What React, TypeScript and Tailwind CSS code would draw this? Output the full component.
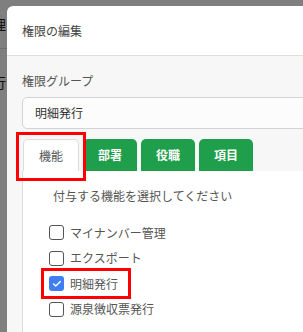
import { Check } from 'lucide-react'

const font = { fontFamily: '"Noto Sans CJK JP", "Noto Sans", sans-serif' }

const features = [
  { name: 'マイナンバー管理', checked: false },
  { name: 'エクスポート', checked: false },
  { name: '明細発行', checked: true },
  { name: '源泉徴収票発行', checked: false },
]

const tabs = ['部署', '役職', '項目']

function Checkbox({ checked }: { checked: boolean }) {
  if (checked) {
    return (
      <span className="flex h-[15px] w-[15px] items-center justify-center rounded-[3px] bg-[#3f7ef5]">
        <Check size={10} strokeWidth={3.5} className="text-white" />
      </span>
    )
  }
  return <span className="h-[15px] w-[15px] rounded-[3px] border border-[#555] bg-white" />
}

export default function App() {
  return (
    <div className="relative h-[332px] w-[303px] overflow-hidden bg-white text-[12px]" style={font}>
      {/* page behind the dialog */}
      <div className="ml-[-8px] flex flex-col text-[#222]">
        <div className="flex h-[48px] items-center text-[14px]">理</div>
        <div className="h-px bg-[#ddd]" />
        <div className="flex h-[66px] items-center text-[14px]">行</div>
      </div>
      <div className="absolute inset-0 bg-black/50" />

      {/* dialog */}
      <div className="absolute left-[7px] top-[6px] w-[430px] overflow-hidden rounded-[6px] bg-white">
        <div className="flex h-[50px] items-center border-b border-[#dcdfe3] px-[15px] text-[#444]">権限の編集</div>
        <div className="bg-[#f7f7f7] pl-[15px] pt-[16px]">
          <div className="leading-[18px] text-[#555]">権限グループ</div>
          <div className="mt-[7px] flex h-[32px] items-center rounded-[5px] border border-[#cfd3d7] bg-[#fcfcfc] px-[12px] text-[#333]">
            明細発行
          </div>
          <div className="mt-[10px] flex gap-[4px] pl-[1px]">
            <div className="flex h-[32px] w-[56px] items-center justify-center rounded-t-[5px] border border-b-0 border-[#dcdcdc] bg-white text-[#555]">
              機能
            </div>
            {tabs.map((t) => (
              <div
                key={t}
                className="flex h-[32px] w-[54px] items-center justify-center rounded-t-[5px] bg-[#1f9e4b] font-bold text-white"
              >
                {t}
              </div>
            ))}
          </div>
          <div className="border-l border-[#dcdcdc] bg-white pb-[20px] pl-[30px] pt-[16px]">
            <div className="leading-[18px] text-[#555]">付与する機能を選択してください</div>
            <div className="ml-[-4px] mt-[15px] flex flex-col">
              {features.map((f) => (
                <label key={f.name} className="flex h-[25.5px] items-center gap-[6px] text-[#555]">
                  <Checkbox checked={f.checked} />
                  <span>{f.name}</span>
                </label>
              ))}
            </div>
          </div>
        </div>
      </div>

      {/* highlight boxes */}
      <div className="absolute left-[16px] top-[132px] h-[49px] w-[70px] border-[3px] border-[#ff0000]" />
      <div className="absolute left-[41px] top-[268px] h-[31px] w-[90px] border-[3px] border-[#ff0000]" />
    </div>
  )
}
